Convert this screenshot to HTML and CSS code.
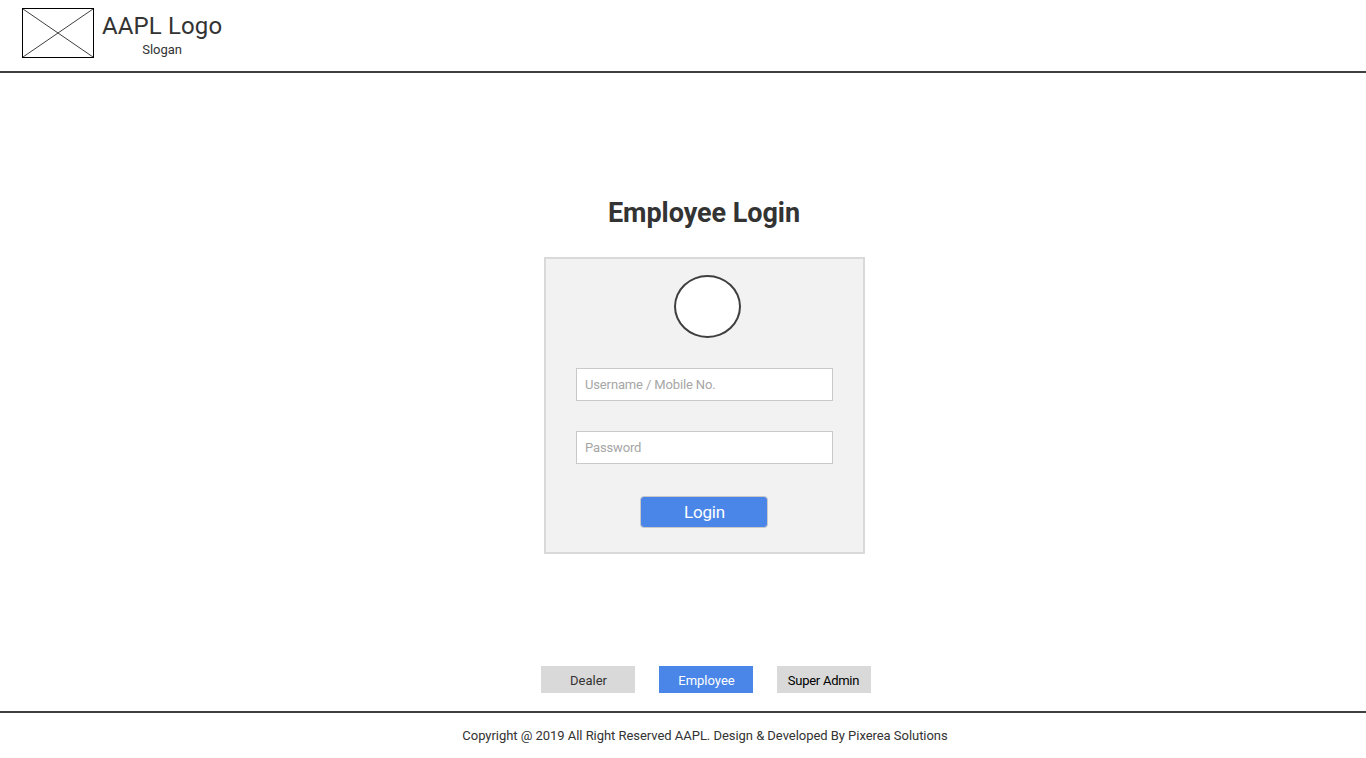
FILE: index.html
```html
<!DOCTYPE html>
<html lang="en">
<head>
<meta charset="utf-8">
<title>Employee Login</title>
<link rel="stylesheet" href="styles.css">
</head>
<body>
<div class="page">
  <header class="header">
    <svg class="logo-mark" width="72" height="50" viewBox="0 0 72 50" aria-hidden="true">
      <rect x="0.5" y="0.5" width="71" height="49" fill="#fff" stroke="#000"/>
      <path d="M1 1L71 49M71 1L1 49" fill="none" stroke="#3f3f3f" stroke-width="1"/>
    </svg>
    <div class="brand">
      <div class="brand-name">AAPL Logo</div>
      <div class="brand-slogan">Slogan</div>
    </div>
  </header>
  <main class="main">
    <h1 class="title">Employee Login</h1>
    <form class="card">
      <div class="avatar"></div>
      <input class="field field-user" type="text" placeholder="Username / Mobile No.">
      <input class="field field-pass" type="password" placeholder="Password">
      <button class="login" type="button">Login</button>
    </form>
  </main>
  <nav class="roles">
    <a class="role">Dealer</a>
    <a class="role role-active">Employee</a>
    <a class="role role-dark">Super Admin</a>
  </nav>
  <footer class="footer">Copyright @ 2019 All Right Reserved AAPL. Design &amp; Developed By Pixerea Solutions</footer>
</div>
</body>
</html>
```
FILE: styles.css
```css
* { box-sizing: border-box; }
html, body { margin: 0; padding: 0; background: #fff; }
body { font-family: Roboto, "Liberation Sans", sans-serif; color: #333; overflow: hidden; }
.page { width: 1366px; height: 758px; display: flex; flex-direction: column; }
.header { height: 73px; flex: none; border-bottom: 2px solid #3f3f3f; display: flex; align-items: flex-start; padding: 8px 0 0 22px; gap: 8px; }
.logo-mark { display: block; flex: none; }
.brand { display: flex; flex-direction: column; align-items: center; padding-top: 3px; }
.brand-name { font-size: 24px; line-height: 30px; color: #333; letter-spacing: 0.12px; }
.brand-slogan { font-size: 13px; line-height: 16px; margin-top: 1px; color: #333; }
.main { flex: none; height: 593px; display: flex; flex-direction: column; align-items: center; padding: 124px 0 0 43px; }
.title { margin: 0 1px 0 0; font-size: 27px; line-height: 32px; font-weight: 700; color: #333; letter-spacing: -0.05px; }
.card { width: 321px; height: 297px; margin-top: 28px; background: #f2f2f2; border: 2px solid #d9d9d9; display: flex; flex-direction: column; align-items: center; padding-top: 16px; }
.avatar { width: 67px; height: 63px; margin-left: 6px; border: 2px solid #3f3f3f; border-radius: 50%; background: #fff; flex: none; }
.field { width: 257px; height: 33px; flex: none; border: 1px solid #c9c9c9; background: #fff; padding: 0 8px; font: 13px Roboto, "Liberation Sans", sans-serif; letter-spacing: -0.14px; color: #333; outline: none; border-radius: 0; }
.field::placeholder { color: #a6a6a6; opacity: 1; }
.field-user { margin-top: 30px; }
.field-pass { margin-top: 30px; }
.login { width: 128px; height: 32px; flex: none; margin: 32px 2px 0 0; background: #4a86e8; border: 1px solid #c9c9c9; border-radius: 4px; color: #fff; font: 17px Roboto, "Liberation Sans", sans-serif; letter-spacing: -0.2px; padding: 0 0 0 2px; }
.roles { flex: none; height: 45px; display: flex; justify-content: center; gap: 24px; padding-left: 45px; }
.role { width: 94px; height: 27px; padding-left: 2px; background: #d9d9d9; color: #333; font-size: 13px; line-height: 29px; text-align: center; }
.role-active { background: #4a86e8; color: #fff; }
.role-dark { color: #000; letter-spacing: -0.27px; padding-left: 0; }
.footer { flex: none; height: 47px; border-top: 2px solid #3f3f3f; text-align: center; font-size: 13px; line-height: 46px; letter-spacing: -0.04px; color: #333; padding-left: 44px; }
```
